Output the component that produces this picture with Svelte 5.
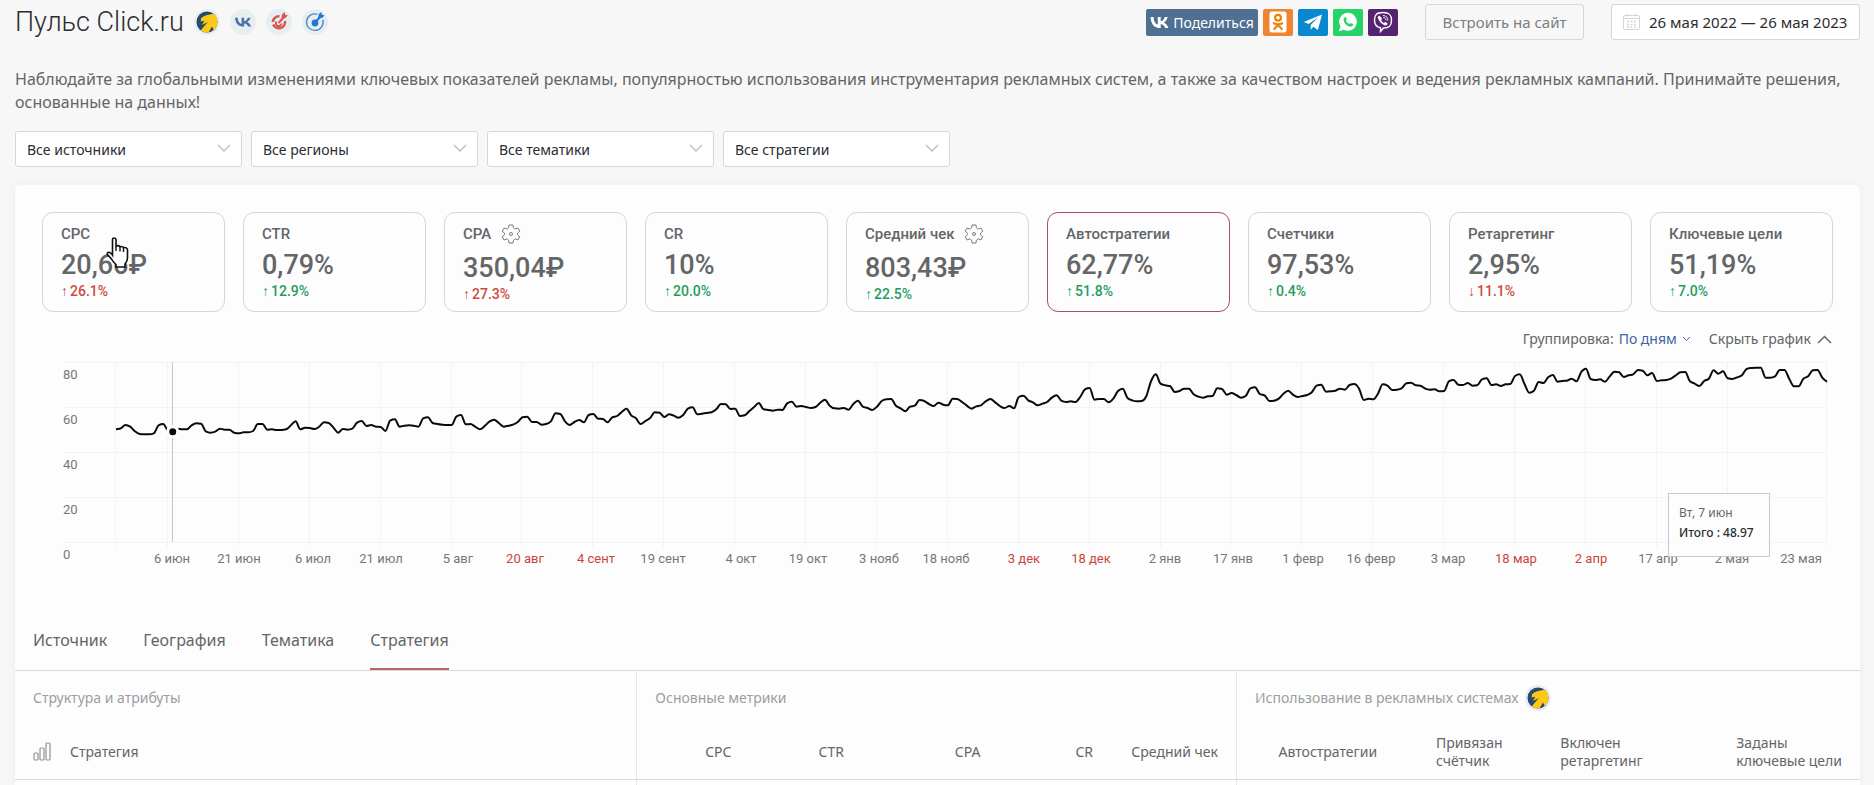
<script>
  let filters = [
    { id: 'sources', label: 'Все источники' },
    { id: 'regions', label: 'Все регионы' },
    { id: 'topics', label: 'Все тематики' },
    { id: 'strategies', label: 'Все стратегии' }
  ];

  let cards = [
    { name: 'CPC', value: '20,66₽', delta: '26.1%', dir: '↑', bad: true, pointer: true },
    { name: 'CTR', value: '0,79%', delta: '12.9%', dir: '↑' },
    { name: 'CPA', value: '350,04₽', delta: '27.3%', dir: '↑', bad: true, gear: true },
    { name: 'CR', value: '10%', delta: '20.0%', dir: '↑' },
    { name: 'Средний чек', value: '803,43₽', delta: '22.5%', dir: '↑', gear: true },
    { name: 'Автостратегии', value: '62,77%', delta: '51.8%', dir: '↑' },
    { name: 'Счетчики', value: '97,53%', delta: '0.4%', dir: '↑' },
    { name: 'Ретаргетинг', value: '2,95%', delta: '11.1%', dir: '↓', bad: true },
    { name: 'Ключевые цели', value: '51,19%', delta: '7.0%', dir: '↑' }
  ];
  let selectedCard = $state('Автостратегии');

  let tabs = ['Источник', 'География', 'Тематика', 'Стратегия'];
  let activeTab = $state('Стратегия');

  let columns = [
    { lines: ['CPC'], width: 6.1 },
    { lines: ['CTR'], width: 6.1 },
    { lines: ['CPA'], width: 7.4 },
    { lines: ['CR'], width: 6.1 },
    { lines: ['Средний чек'], width: 6.8, last: true },
    { lines: ['Автостратегии'], width: 8.6 },
    { lines: ['Привязан', 'счётчик'], width: 6.8 },
    { lines: ['Включен', 'ретаргетинг'], width: 7.6 },
    { lines: ['Заданы', 'ключевые цели'], width: 10.8 }
  ];

  // One reading per day, counted in steps down the plot; 542 steps span 80 units
  const BOTTOM = 580;
  const STEP = 3;
  const readings = [
    242, 239, 229, 234, 248, 256, 257, 257, 254, 230, 226, 246, 249, 240, 242, 242, 230, 224, 225, 248,
    252, 249, 240, 243, 243, 252, 254, 251, 251, 247, 226, 226, 243, 242, 244, 244, 242, 230, 218, 242,
    237, 238, 241, 234, 221, 223, 237, 252, 241, 243, 240, 222, 217, 232, 229, 234, 235, 247, 216, 212,
    234, 231, 230, 231, 234, 209, 206, 223, 226, 228, 229, 229, 204, 199, 227, 226, 234, 242, 232, 219,
    213, 223, 234, 231, 228, 220, 206, 204, 220, 220, 228, 226, 218, 194, 196, 218, 229, 220, 214, 221,
    199, 196, 210, 211, 221, 206, 202, 190, 180, 200, 209, 226, 217, 208, 191, 192, 205, 197, 201, 207,
    199, 180, 176, 197, 195, 193, 191, 182, 166, 167, 181, 180, 202, 200, 187, 175, 163, 182, 184, 186,
    183, 184, 164, 159, 174, 172, 175, 178, 175, 162, 153, 171, 179, 180, 178, 183, 166, 156, 174, 178,
    184, 174, 157, 152, 151, 171, 179, 188, 174, 171, 154, 157, 166, 172, 162, 168, 170, 150, 151, 160,
    171, 180, 173, 170, 158, 151, 161, 172, 178, 172, 179, 145, 141, 155, 161, 170, 165, 160, 147, 140,
    156, 160, 158, 160, 145, 122, 118, 153, 151, 151, 161, 150, 127, 120, 148, 155, 158, 157, 142, 97,
    77, 105, 110, 112, 130, 127, 120, 120, 137, 144, 147, 143, 142, 119, 121, 138, 133, 139, 147, 142,
    119, 116, 136, 140, 157, 156, 150, 135, 126, 138, 145, 142, 139, 131, 111, 108, 129, 128, 126, 120,
    123, 109, 106, 120, 154, 150, 152, 135, 107, 111, 124, 123, 119, 104, 102, 110, 111, 120, 123, 122,
    128, 127, 98, 94, 108, 109, 103, 111, 110, 92, 89, 109, 107, 112, 107, 106, 82, 77, 106, 132,
    126, 100, 103, 86, 79, 99, 97, 96, 90, 98, 70, 60, 91, 94, 92, 99, 84, 69, 71, 85,
    80, 77, 64, 66, 80, 73, 97, 95, 94, 90, 80, 71, 70, 98, 105, 112, 97, 90, 65, 75,
    68, 89, 91, 86, 80, 61, 58, 57, 57, 87, 87, 83, 64, 64, 90, 113, 113, 90, 83, 65,
    64, 87, 99
  ];

  const plot = { left: 74, right: 1785, top: 8, bottom: 188 };
  const dayWidth = (plot.right - plot.left) / (readings.length - 1);
  const rows = [80, 60, 40, 20, 0];

  const dayX = (day) => plot.left + day * dayWidth;
  const readingY = (r) => plot.bottom - (BOTTOM - r) / STEP;

  // Gridlines go every 15 days from 6 June, x is the centre of the caption
  let dates = [
    { text: '6 июн', x: 130 },
    { text: '21 июн', x: 197 },
    { text: '6 июл', x: 271 },
    { text: '21 июл', x: 339 },
    { text: '5 авг', x: 416 },
    { text: '20 авг', x: 483, mark: true },
    { text: '4 сент', x: 554, mark: true },
    { text: '19 сент', x: 621 },
    { text: '4 окт', x: 699 },
    { text: '19 окт', x: 766 },
    { text: '3 нояб', x: 837 },
    { text: '18 нояб', x: 904 },
    { text: '3 дек', x: 982, mark: true },
    { text: '18 дек', x: 1049, mark: true },
    { text: '2 янв', x: 1123 },
    { text: '17 янв', x: 1191 },
    { text: '1 февр', x: 1261 },
    { text: '16 февр', x: 1329 },
    { text: '3 мар', x: 1406 },
    { text: '18 мар', x: 1474, mark: true },
    { text: '2 апр', x: 1549, mark: true },
    { text: '17 апр', x: 1616 },
    { text: '2 мая', x: 1690 },
    { text: '23 мая', x: 1759 }
  ];
  const gridDays = [0, ...Array.from({ length: 23 }, (_, i) => 11 + i * 15), 362];

  const hoverDay = 12;

  // Monotone cubic through the daily points
  function linePath(values) {
    const pts = values.map((r, i) => [dayX(i), readingY(r)]);
    const slope = (i) => (pts[i + 1][1] - pts[i][1]) / dayWidth;
    const tangent = pts.map((_, i) => {
      if (i === 0) return slope(0);
      if (i === pts.length - 1) return slope(i - 1);
      const a = slope(i - 1);
      const b = slope(i);
      if (a * b <= 0) return 0;
      return Math.sign(a) * Math.min(Math.abs(a), Math.abs(b), Math.abs(a + b) / 4) * 2;
    });
    let d = `M${pts[0][0]},${pts[0][1]}`;
    for (let i = 1; i < pts.length; i++) {
      const [x0, y0] = pts[i - 1];
      const [x1, y1] = pts[i];
      const h = dayWidth / 3;
      d += `C${(x0 + h).toFixed(2)},${(y0 + tangent[i - 1] * h).toFixed(2)} ${(x1 - h).toFixed(2)},${(y1 - tangent[i] * h).toFixed(2)} ${x1.toFixed(2)},${y1.toFixed(2)}`;
    }
    return d;
  }

  const line = linePath(readings);
</script>

{#snippet direct()}
  <svg class="badge" viewBox="0 0 26 26" aria-hidden="true">
    <circle cx="13" cy="13" r="13" fill="#e6eef1" />
    <circle cx="13" cy="13" r="10.5" fill="#25496f" />
    <path d="M7 9.300C10 6.500 14 5.600 19.500 4.800c2.600 2 4.200 5.200 4 8.600-.2 3-1.600 5.600-3.700 7.500l-1.900-3.300-3.200 5.700c-2.700.500-5.700-.2-7.900-2.100l7-8.300-5.800 3.200 2.300-4.300-3.500.8z" fill="#fdc916" />
  </svg>
{/snippet}

{#snippet vkMark()}
  <path d="M9.800 12C3.700 12 .3 7.800.1.900h3c.1 5 2.400 7.200 4.200 7.600V.9h2.900v4.400c1.700-.2 3.500-2.200 4.100-4.400h2.900c-.5 2.600-2.500 4.600-3.900 5.500 1.400.7 3.700 2.400 4.600 5.600h-3.200c-.7-2.100-2.400-3.800-4.500-4V12z" fill="currentColor" />
{/snippet}

<div class="page">
  <header class="top">
    <h1>Пульс Click.ru</h1>
    <div class="systems">
      {@render direct()}
      <svg class="badge vk" viewBox="0 0 26 26" aria-hidden="true">
        <circle cx="13" cy="13" r="13" fill="#e6eef1" />
        <g transform="translate(5 8) scale(.9 .8)">{@render vkMark()}</g>
      </svg>
      <svg class="badge" viewBox="0 0 26 26" aria-hidden="true">
        <circle cx="13" cy="13" r="13" fill="#e6eef1" />
        <g fill="none" stroke="#db5650">
          <path d="M13.500 7.300A6.200 6.200 0 0 0 6.800 13M7.200 15.500A6.200 6.200 0 0 0 19 12" stroke-width="2.600" />
          <path d="M10.500 12.500a2.800 2.800 0 1 0 5 2" stroke-width="2" />
          <path d="m12.500 14 6-6.500" stroke-width="2.200" />
        </g>
        <path d="m15.500 9.500.3-3.800L18.600 3l.6 2.700 2.700.6-2.700 2.900z" fill="#db5650" />
      </svg>
      <svg class="badge" viewBox="0 0 26 26" aria-hidden="true">
        <circle cx="13" cy="13" r="13" fill="#e6eef1" />
        <path d="M15.500 5.300a8.300 8.300 0 1 0 5.300 5.500" fill="none" stroke="#4a86d4" stroke-width="1.300" />
        <circle cx="13" cy="14" r="3.400" fill="#2377cf" />
        <path d="m13 13.500 6-6.500" stroke="#2377cf" stroke-width="2.200" />
        <path d="m16.200 8.500.6-3.500 2.600-2 .4 2.700 2.700.5-2 2.600-3.300.5z" fill="#2377cf" />
      </svg>
    </div>

    <div class="share">
      <a class="share-vk" href="#vk">
        <svg width="19" height="13" viewBox="0 0 18 13" aria-hidden="true">{@render vkMark()}</svg>
        Поделиться
      </a>
      <a class="ok" href="#ok" aria-label="Одноклассники">
        <svg width="20" height="22" viewBox="0 0 20 22" aria-hidden="true">
          <rect x="1.500" y=".5" width="17" height="21" rx="2.500" fill="#fff" />
          <g fill="none" stroke="#ee8208" stroke-width="2.200" stroke-linecap="round">
            <circle cx="10" cy="6.800" r="2.900" />
            <path d="M5.800 12.200q4.200 2.400 8.400 0M10 14l-3.800 4M10 14l3.800 4" />
          </g>
        </svg>
      </a>
      <a class="tg" href="#tg" aria-label="Telegram">
        <svg width="20" height="20" viewBox="0 0 20 20" aria-hidden="true">
          <path d="M19 2.500.8 10l4.900 1.900L15.500 5l-7.800 8v4.700l2.700-2.900 4.500 3.200z" fill="#fff" />
        </svg>
      </a>
      <a class="wa" href="#wa" aria-label="WhatsApp">
        <svg width="20" height="20" viewBox="0 0 20 20" aria-hidden="true">
          <path d="M10.200.8A9 9 0 0 0 2.500 14.600L.8 19.200l4.900-1.400A9 9 0 1 0 10.200.8z" fill="#fff" />
          <path d="M7 5.200c.6-.3 1 0 1.300.8l.5 1.300c.2.600-.7 1.100-.8 1.500.8 1.700 2 2.700 3.600 3.300.5-.2.900-1.200 1.300-1.100l2 1c.6.400-.1 2-1.200 2.400-3.500 1-8.200-3.300-8.100-6.900.1-1 .7-1.900 1.400-2.300z" fill="#25d366" />
        </svg>
      </a>
      <a class="viber" href="#viber" aria-label="Viber">
        <svg width="20" height="22" viewBox="0 0 20 22" aria-hidden="true">
          <path d="M10 1.500c6.300 0 8.500 2.200 8.500 7.800S16.200 17 10.500 17L7.500 20.500v-3.800c-4.300-.7-6-2.900-6-7.400C1.500 3.700 3.700 1.500 10 1.500z" fill="none" stroke="#fff" stroke-width="1.400" />
          <path d="M6 4.700c-1 .5-1.400 1.300-1.200 2.100.9 3.500 4.600 7.200 7.900 7.800.9 0 1.700-.8 1.900-1.500.1-.9-2.300-2.200-2.800-2l-.9 1c-1.400-.6-2.300-1.500-2.800-3l1-.9C9.200 7.500 7 4.500 6 4.700z" fill="#fff" />
          <path d="M10.300 4.500c2.800.2 4.600 1.800 4.600 4.800M10.600 6.500c1.500.1 2.300 1 2.400 2.600" fill="none" stroke="#fff" stroke-width=".9" stroke-linecap="round" />
        </svg>
      </a>
    </div>
    <button class="embed" type="button">Встроить на сайт</button>
    <button class="period" type="button">
      <svg width="18" height="18" viewBox="0 0 18 18" fill="none" stroke="#d3d6d9" aria-hidden="true">
        <rect x=".5" y="2.500" width="16" height="14" rx="1.500" />
        <path d="M.5 5.500h16M4.500.5v3M12.500.5v3" />
        <path d="M4 8.500h9M4 11.500h9M4 14h9" stroke-width="1.500" stroke-dasharray="2 1.500" />
      </svg>
      26 мая 2022 — 26 мая 2023
    </button>
  </header>

  <p class="lead">
    Наблюдайте за глобальными изменениями ключевых показателей рекламы, популярностью использования
    инструментария рекламных систем, а также за качеством настроек и ведения рекламных кампаний.
    Принимайте решения, основанные на данных!
  </p>

  <div class="filters">
    {#each filters as f (f.id)}
      <div class="filter">
        <select id={f.id} aria-label={f.label}>
          <option>{f.label}</option>
        </select>
        <svg width="14" height="9" viewBox="0 0 14 9" aria-hidden="true">
          <path d="m1 1 6 6 6-6" fill="none" stroke="#b9bcc0" stroke-width="1.300" />
        </svg>
      </div>
    {/each}
  </div>

  <main class="panel">
    <div class="cards">
      {#each cards as card (card.name)}
        <button
          type="button"
          class="card"
          class:selected={card.name === selectedCard}
          onclick={() => selectedCard = card.name}
        >
          <span class="card-name" class:tall={card.gear}>
            {card.name}
            {#if card.gear}
              <svg width="20" height="20" viewBox="0 0 20 20" fill="none" stroke="#77797c" aria-hidden="true">
                <path d="M8 1h4l.3 2.200q.1 1 1 1.500.8.500 1.700.1l1.900-.8 1.900 3.200-1.700 1.300q-.7.600-.7 1.500t.7 1.500l1.700 1.300-1.900 3.200-1.900-.8q-.9-.4-1.700.1-.9.500-1 1.500L12 19H8l-.3-2.200q-.1-1-1-1.500-.8-.5-1.700-.1l-1.900.8-1.900-3.200 1.700-1.300q.7-.6.700-1.500t-.7-1.500L1.200 7.200 3.100 4l1.900.8q.9.400 1.700-.1.900-.5 1-1.500z" stroke-linejoin="round" />
                <circle cx="10" cy="10" r="1.500" />
              </svg>
            {/if}
          </span>
          <span class="card-value">{card.value}</span>
          <span class="card-delta" class:bad={card.bad}><i>{card.dir}</i>{card.delta}</span>
          {#if card.pointer}
            <svg class="pointer" width="23" height="31" viewBox="0 0 23 31" aria-hidden="true">
              <path d="M6.500 18V2.500Q6.500 1 8 1t2 1.500V9q2.500-1 4 .7 2.500-.7 3.500 1 3.500-.7 4 2V21q0 3-2.500 6v3h-9v-2.500Q7 25 5.500 22L1.500 17.500q-.8-2 1.500-2.300Q5 15.500 6.500 18z" fill="#fff" stroke="#111" stroke-width="1.600" />
              <path d="M10 9v5M14 10v4.500M17.500 11v4" stroke="#111" stroke-width="1.400" />
            </svg>
          {/if}
        </button>
      {/each}
    </div>

    <div class="chart-tools">
      <span>Группировка:</span>
      <button class="group" type="button">
        По дням
        <svg width="9" height="6" viewBox="0 0 9 6" aria-hidden="true">
          <path d="m1 1 3.500 3.500L8 1" fill="none" stroke="currentColor" />
        </svg>
      </button>
      <button class="toggle" type="button">
        Скрыть график
        <svg width="15" height="9" viewBox="0 0 15 9" aria-hidden="true">
          <path d="m1 8 6.500-6.500L14 8" fill="none" stroke="currentColor" stroke-width="1.500" />
        </svg>
      </button>
    </div>

    <div class="chart">
      <svg viewBox="0 0 1791 230" role="img" aria-label="Автостратегии по дням">
        {#each rows as value, i}
          <line class="grid" x1="22" x2={plot.right} y1={plot.top + i * 45 + 0.5} y2={plot.top + i * 45 + 0.5} />
          <text class="axis" x="21" y={plot.top + i * 45 + 17}>{value}</text>
        {/each}
        {#each gridDays as day}
          {@const x = Math.round(dayX(day)) - 0.5}
          <line class="grid" x1={x} x2={x} y1={plot.top} y2={plot.bottom + 5} />
        {/each}
        {#each dates as d}
          <text class="axis date" class:mark={d.mark} x={d.x} y="209">{d.text}</text>
        {/each}
        <line class="hair" x1={Math.round(dayX(hoverDay)) - 0.5} x2={Math.round(dayX(hoverDay)) - 0.5} y1={plot.top} y2={plot.bottom} />
        <path class="series" d={line} />
        <circle class="dot" cx={dayX(hoverDay)} cy={readingY(readings[hoverDay])} r="5" />
      </svg>
      <div class="tooltip">
        <span>Вт, 7 июн</span>
        <strong>Итого : 48.97</strong>
      </div>
    </div>

    <div class="tabs" role="tablist">
      {#each tabs as tab}
        <button
          type="button"
          role="tab"
          aria-selected={tab === activeTab}
          class:active={tab === activeTab}
          onclick={() => activeTab = tab}
        >{tab}</button>
      {/each}
    </div>

    <table>
      <colgroup>
        <col />
        {#each columns as c}
          <col style="width: {c.width}%" />
        {/each}
      </colgroup>
      <thead>
        <tr class="groups">
          <th class="split">Структура и атрибуты</th>
          <th class="split" colspan="5">Основные метрики</th>
          <th colspan="4"><span class="with-badge">Использование в рекламных системах {@render direct()}</span></th>
        </tr>
        <tr class="heads">
          <th class="first split">
            <span class="first-cell">
              <svg width="19" height="19" viewBox="0 0 19 19" fill="none" stroke="#919396" stroke-width="1.200" aria-hidden="true">
                <rect x="1" y="11" width="4" height="7" rx="1" />
                <rect x="7" y="6" width="4" height="12" rx="1" />
                <rect x="13" y="1" width="4" height="17" rx="1" />
              </svg>
              Стратегия
            </span>
          </th>
          {#each columns as c}
            <th class:split={c.last}>
              <span class="head-text">
                {#each c.lines as l}<span>{l}</span>{/each}
              </span>
            </th>
          {/each}
        </tr>
      </thead>
      <tbody>
        <tr>
          <td class="split"></td>
          <td class="split" colspan="5"></td>
          <td colspan="4"></td>
        </tr>
      </tbody>
    </table>
  </main>
</div>

<style>
  :global(body) {
    background: #f7f7f7;
  }

  .page {
    box-sizing: border-box;
    display: flex;
    flex-direction: column;
    min-height: 100vh;
    padding: 4px 14px 0 15px;
    color: #646567;
    font-family: "Noto Sans", "Open Sans", sans-serif;
    font-size: 14px;
  }

  button,
  select {
    font: inherit;
    color: inherit;
    margin: 0;
    cursor: pointer;
  }

  button {
    padding: 0;
    border: 0;
    background: none;
  }

  .top {
    display: flex;
    align-items: center;
    height: 36px;
  }

  h1 {
    margin: 0 10px 0 0;
    color: #2b2d30;
    font-family: Roboto, sans-serif;
    font-size: 27px;
    font-weight: 300;
    line-height: 36px;
  }

  .badge {
    width: 26px;
    height: 26px;
    flex: none;
  }

  .badge.vk {
    color: #4a72a8;
  }

  .systems {
    display: flex;
    gap: 10px;
    margin-right: auto;
  }

  .share {
    display: flex;
    gap: 5px;
    margin-right: 27px;
  }

  .share a {
    display: flex;
    align-items: center;
    justify-content: center;
    width: 30px;
    height: 27px;
    border-radius: 2px;
    color: #fff;
    text-decoration: none;
  }

  .share a.share-vk {
    gap: 4px;
    width: 112px;
    background: #4f6f93;
  }

  .share .ok {
    background: #ee8533;
  }

  .share .tg {
    background: #0a88cf;
  }

  .share .wa {
    background: #25d366;
  }

  .share .viber {
    background: #54246f;
  }

  .embed,
  .period {
    box-sizing: border-box;
    height: 36px;
    border: 1px solid #d5d7da;
    border-radius: 3px;
    font-size: 15px;
  }

  .embed {
    width: 159px;
    margin-right: 27px;
    color: #7b7e82;
  }

  .period {
    display: flex;
    align-items: center;
    gap: 8px;
    width: 249px;
    padding: 0 11px;
    background: #fff;
    color: #2b2d30;
    white-space: nowrap;
  }

  .lead {
    margin: 28px 0 17px;
    font-size: 16px;
    line-height: 23px;
  }

  .filters {
    display: flex;
    gap: 9px;
    margin-bottom: 18px;
  }

  .filter {
    position: relative;
    width: 227px;
  }

  .filter select {
    box-sizing: border-box;
    width: 100%;
    height: 36px;
    padding: 0 36px 0 11px;
    border: 1px solid #d5d7da;
    border-radius: 3px;
    appearance: none;
    background: #fff;
    color: #2b2d30;
  }

  .filter svg {
    position: absolute;
    top: 13px;
    right: 11px;
    pointer-events: none;
  }

  .panel {
    flex: 1;
    border-radius: 5px 5px 0 0;
    background: #fdfdfd;
    box-shadow: 0 0 8px #ececec;
  }

  .cards {
    display: flex;
    gap: 18px;
    padding: 27px 27px 0;
  }

  .card {
    position: relative;
    box-sizing: border-box;
    display: flex;
    flex: 1;
    flex-direction: column;
    align-items: flex-start;
    height: 100px;
    padding: 11px 18px 0;
    border: 1px solid #d4d5d8;
    border-radius: 11px;
    font-family: Roboto, sans-serif;
    font-size: 15px;
    font-weight: 500;
    text-align: left;
  }

  .card.selected {
    border-color: #a94f55;
  }

  .card-name {
    display: flex;
    align-items: center;
    gap: 10px;
    height: 20px;
    white-space: nowrap;
  }

  .card-name.tall {
    padding-bottom: 3px;
  }

  .card-value {
    margin-top: 5px;
    font-size: 27px;
    line-height: 32px;
  }

  .card-delta {
    color: #1f9d5f;
    font-size: 14px;
    line-height: 20px;
  }

  .card-delta.bad {
    color: #cd4b40;
  }

  .card-delta i {
    margin-right: 2px;
    font-style: normal;
    font-weight: 400;
  }

  .pointer {
    position: absolute;
    top: 24px;
    left: 63px;
  }

  .chart-tools {
    display: flex;
    justify-content: flex-end;
    height: 24px;
    padding: 15px 28px 3px;
    line-height: 24px;
  }

  .group {
    display: flex;
    align-items: center;
    gap: 5px;
    margin: 0 18px 0 5px;
    color: #3f66a6;
  }

  .toggle {
    display: flex;
    align-items: center;
    gap: 6px;
  }

  .chart {
    position: relative;
    margin: 0 27px;
  }

  .chart > svg {
    display: block;
    width: 100%;
  }

  .grid {
    stroke: #f1f4f6;
  }

  .hair {
    stroke: #c4c4c4;
  }

  .axis {
    fill: #75777a;
    font-family: Roboto, sans-serif;
    font-size: 13px;
  }

  .axis.date {
    text-anchor: middle;
  }

  .axis.mark {
    fill: #c9453d;
  }

  .series {
    fill: none;
    stroke: #0a0a0a;
    stroke-width: 2;
  }

  .dot {
    fill: #0a0a0a;
    stroke: #fdfdfd;
    stroke-width: 3;
  }

  .tooltip {
    position: absolute;
    top: 139px;
    right: 63px;
    box-sizing: border-box;
    display: flex;
    flex-direction: column;
    width: 102px;
    height: 64px;
    padding: 9px 10px;
    border: 1px solid #c8c9cb;
    background: #fdfdfd;
    font-size: 12px;
    line-height: 20px;
    white-space: nowrap;
  }

  .tooltip strong {
    color: #2b2d30;
    font-weight: 500;
  }

  .tabs {
    display: flex;
    gap: 36px;
    margin-top: 26px;
    padding: 0 18px;
    border-bottom: 1px solid #d8d9dc;
    font-size: 16px;
  }

  .tabs button {
    height: 60px;
    padding-top: 2px;
    border-bottom: 2px solid transparent;
  }

  .tabs .active {
    border-color: #b9646a;
  }

  table {
    width: 100%;
    table-layout: fixed;
    border-collapse: collapse;
  }

  th {
    padding: 0 18px;
    font-weight: 400;
    text-align: right;
    white-space: nowrap;
  }

  .split {
    border-right: 1px solid #e6e8ea;
  }

  .groups th {
    height: 53px;
    color: #9b9ea2;
    text-align: left;
  }

  .with-badge {
    display: flex;
    align-items: center;
    gap: 6px;
  }

  .heads th {
    height: 55px;
    border-bottom: 1px solid #d8d9dc;
    line-height: 18px;
  }

  .heads .first {
    text-align: left;
  }

  .first-cell {
    display: flex;
    align-items: center;
    gap: 18px;
  }

  .head-text {
    display: inline-flex;
    flex-direction: column;
    text-align: left;
  }

  td {
    height: 5px;
    padding: 0;
  }
</style>
